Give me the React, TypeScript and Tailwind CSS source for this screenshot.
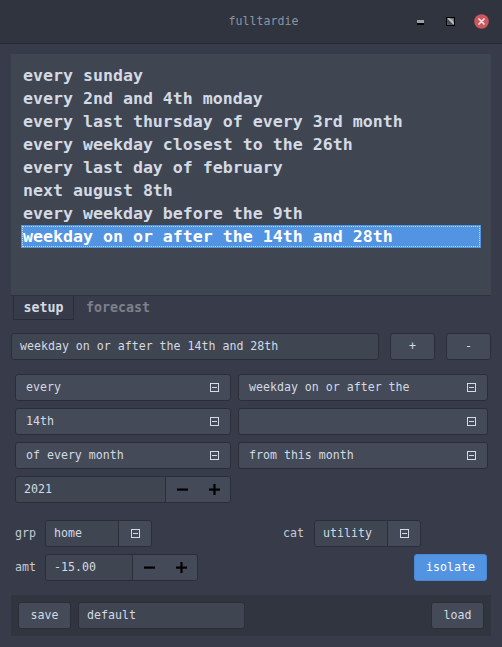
import React from "react";

const MONO = "font-['DejaVu_Sans_Mono','Liberation_Mono',monospace]";

const items = [
  "every sunday",
  "every 2nd and 4th monday",
  "every last thursday of every 3rd month",
  "every weekday closest to the 26th",
  "every last day of february",
  "next august 8th",
  "every weekday before the 9th",
  "weekday on or after the 14th and 28th",
];

function DropIcon() {
  return (
    <svg width="9" height="9" viewBox="0 0 9 9" className="shrink-0">
      <rect x="0.5" y="0.5" width="8" height="8" fill="none" stroke="#d3dae3" strokeWidth="1" />
      <line x1="2" y1="4.5" x2="7" y2="4.5" stroke="#d3dae3" strokeWidth="1" />
    </svg>
  );
}

function Minus() {
  return (
    <svg width="11" height="11" viewBox="0 0 11 11">
      <rect x="0" y="4.5" width="11" height="2.2" fill="#000" />
    </svg>
  );
}

function Plus() {
  return (
    <svg width="11" height="11" viewBox="0 0 11 11">
      <rect x="0" y="4.5" width="11" height="2.2" fill="#000" />
      <rect x="4.4" y="0" width="2.2" height="11" fill="#000" />
    </svg>
  );
}

function Combo({ text, w }: { text: string; w: string }) {
  return (
    <div
      className={`${w} h-[27px] flex items-center justify-between pl-[10px] pr-[11px] bg-[#444a58] border border-[#2b2e39] rounded-[3px] text-[11.6px] text-[#d3dae3]`}
    >
      <span className="whitespace-pre">{text}</span>
      <DropIcon />
    </div>
  );
}

function Spin({ value, inputW }: { value: string; inputW: string }) {
  return (
    <div className="flex h-[27px] border border-[#2b2e39] rounded-[3px] overflow-hidden">
      <div className={`${inputW} bg-[#404552] flex items-center pl-[8px] text-[11.6px] text-[#d3dae3]`}>{value}</div>
      <div className="w-[65px] flex bg-[#444a58] border-l border-[#2b2e39]">
        <div className="flex-1 flex items-center justify-center">
          <Minus />
        </div>
        <div className="flex-1 flex items-center justify-center">
          <Plus />
        </div>
      </div>
    </div>
  );
}

function ComboSplit({ value, inputW }: { value: string; inputW: string }) {
  return (
    <div className="flex h-[27px] border border-[#2b2e39] rounded-[3px] overflow-hidden">
      <div className={`${inputW} bg-[#404552] flex items-center pl-[8px] text-[11.6px] text-[#d3dae3]`}>{value}</div>
      <div className="w-[33px] flex items-center justify-center bg-[#444a58] border-l border-[#2b2e39]">
        <DropIcon />
      </div>
    </div>
  );
}

export default function App() {
  return (
    <div className={`w-[502px] h-[647px] bg-[#383c4a] flex flex-col ${MONO}`}>
      {/* title bar */}
      <div className="h-[44px] shrink-0 bg-[#2f343f] border-b border-[#262932] flex items-center">
        <div className="flex-1" />
        <div className="text-[11.6px] text-[#8a95a5] pl-[38px]">fulltardie</div>
        <div className="flex-1 flex items-center justify-end pr-[13px]">
          <div className="flex flex-col w-[7px] mt-[2px]">
            <div className="h-[3px] bg-[#9aa0a8]" />
            <div className="h-[2px] bg-[#000]" />
          </div>
          <svg width="9" height="9" viewBox="0 0 9 9" className="ml-[22px] mb-[1px]">
            <rect x="0" y="0" width="9" height="9" fill="#000" />
            <rect x="1.2" y="1.2" width="6.6" height="6.6" fill="#8e9196" />
            <polygon points="1.2,1.2 7.8,7.8 1.2,7.8" fill="#4a4d52" />
            <polygon points="1.2,1.2 3.6,1.2 7.8,5.4 7.8,7.8" fill="#c2c5ca" />
          </svg>
          <svg width="15" height="15" viewBox="0 0 15 15" className="ml-[19px]">
            <circle cx="7.5" cy="7.5" r="7.3" fill="#cc575d" />
            <path d="M5 5 L10 10 M10 5 L5 10" stroke="#f4e4e5" strokeWidth="1.7" strokeLinecap="round" />
          </svg>
        </div>
      </div>

      <div className="flex flex-col px-[11px] pt-[10px]">
        {/* list */}
        <div className="h-[242px] bg-[#404552] px-[10px] pt-[10px] border-b border-[#2e323c]">
          {items.map((t, i) => {
            const sel = i === items.length - 1;
            return (
              <div
                key={t}
                className={`h-[23px] leading-[23px] pl-[2px] text-[16.6px] font-bold whitespace-pre ${
                  sel
                    ? "bg-[#5294e2] text-white outline-1 outline-dotted outline-[#c8dcf5] -outline-offset-2"
                    : "text-[#d3dae3]"
                }`}
              >
                {t}
              </div>
            );
          })}
        </div>

        {/* tabs */}
        <div className="h-[24px] flex items-stretch">
          <div className="ml-[2px] w-[61px] flex items-center justify-center border-x border-b border-[#2b2e39] text-[13.3px] font-bold text-[#d3dae3]">
            setup
          </div>
          <div className="ml-[12px] flex items-center text-[13.3px] font-bold text-[#7c818c]">forecast</div>
        </div>

        {/* name row */}
        <div className="mt-[13px] h-[27px] flex gap-[11px]">
          <div className="flex-1 bg-[#404552] border border-[#2b2e39] rounded-[3px] flex items-center pl-[8px] text-[11.6px] text-[#d3dae3]">
            weekday on or after the 14th and 28th
          </div>
          <div className="w-[45px] bg-[#444a58] border border-[#2b2e39] rounded-[3px] flex items-center justify-center text-[11.6px] text-[#d3dae3]">
            +
          </div>
          <div className="w-[45px] bg-[#444a58] border border-[#2b2e39] rounded-[3px] flex items-center justify-center text-[11.6px] text-[#d3dae3]">
            -
          </div>
        </div>

        {/* combos */}
        <div className="mt-[14px] pl-[4px] flex flex-col gap-[7px]">
          <div className="flex gap-[7px]">
            <Combo text="every" w="w-[216px]" />
            <Combo text="weekday on or after the" w="w-[250px]" />
          </div>
          <div className="flex gap-[7px]">
            <Combo text="14th" w="w-[216px]" />
            <Combo text="" w="w-[250px]" />
          </div>
          <div className="flex gap-[7px]">
            <Combo text="of every month" w="w-[216px]" />
            <Combo text="from this month" w="w-[250px]" />
          </div>
          <div className="flex w-[216px]">
            <Spin value="2021" inputW="w-[149px]" />
          </div>
        </div>

        {/* grp / cat */}
        <div className="mt-[17px] h-[27px] flex items-center text-[11.6px] text-[#c5cbd4]">
          <div className="w-[34px] pl-[4px]">grp</div>
          <ComboSplit value="home" inputW="w-[72px]" />
          <div className="ml-[131px] w-[31px]">cat</div>
          <ComboSplit value="utility" inputW="w-[72px]" />
        </div>

        {/* amt */}
        <div className="mt-[7px] h-[27px] flex items-center text-[11.6px] text-[#c5cbd4]">
          <div className="w-[34px] pl-[4px]">amt</div>
          <Spin value="-15.00" inputW="w-[86px]" />
          <div className="ml-auto mr-[4px] w-[73px] h-[27px] bg-[#5294e2] border border-[#4a88d4] rounded-[3px] flex items-center justify-center text-[11.6px] text-white">
            isolate
          </div>
        </div>

        {/* bottom bar */}
        <div className="mt-[14px] h-[41px] bg-[#31353f] flex items-start pt-[7px] px-[7px] gap-[7px] text-[11.6px] text-[#d3dae3]">
          <div className="w-[53px] h-[27px] bg-[#444a58] border border-[#2b2e39] rounded-[3px] flex items-center justify-center">
            save
          </div>
          <div className="w-[167px] h-[27px] bg-[#404552] border border-[#2b2e39] rounded-[3px] flex items-center pl-[8px]">
            default
          </div>
          <div className="ml-auto w-[53px] h-[27px] bg-[#444a58] border border-[#2b2e39] rounded-[3px] flex items-center justify-center">
            load
          </div>
        </div>
      </div>
    </div>
  );
}
